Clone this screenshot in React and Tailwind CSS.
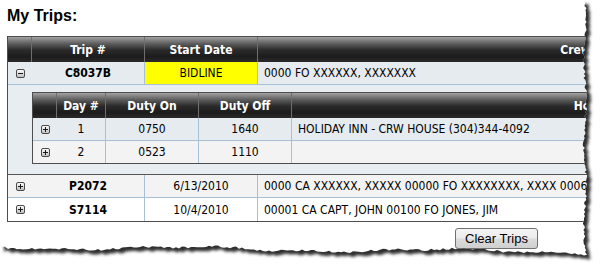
import React from "react";

const bodyFont = "font-['DejaVu_Sans_Condensed','DejaVu_Sans',sans-serif]";
const headBg =
  "bg-[linear-gradient(to_bottom,#a2a2a2_0%,#5a5a5a_28%,#2b2b2b_52%,#1c1c1c_78%,#2a2a2a_100%)]";

const ToggleIcon = ({ open }) => (
  <svg width="9" height="9" viewBox="0 0 9 9" className="block">
    <defs>
      <linearGradient id="tgl" x1="0" y1="0" x2="0" y2="1">
        <stop offset="0" stopColor="#ffffff" />
        <stop offset="1" stopColor="#bdbdbd" />
      </linearGradient>
    </defs>
    <rect x="0.5" y="0.5" width="8" height="8" rx="1.5" fill="url(#tgl)" stroke="#4a4a4a" />
    <path d="M2 4.5H7" stroke="#1a1a1a" />
    {!open && <path d="M4.5 2V7" stroke="#1a1a1a" />}
  </svg>
);

// jagged torn-paper edge along the right and bottom of the shot
const lcg = (seed) => {
  let s = seed;
  return () => {
    s = (s * 16807) % 2147483647;
    return s / 2147483647;
  };
};
const rnd = lcg(11);
const pts = [[0, 0]];
for (let y = 0; y <= 252; y += 2) {
  pts.push([585 + Math.sin(y / 13) * 1.1 + (rnd() - 0.5) * 2.4, y]);
}
for (let x = 587; x >= 0; x -= 3) {
  pts.push([
    x,
    247 + (x / 587) * 5 + Math.sin(x / 41) * 1.8 + Math.sin(x / 13) * 0.8 + (rnd() - 0.5) * 2.2,
  ]);
}
pts.push([0, 248]);
const paper = "M" + pts.map(([x, y]) => `${x.toFixed(1)},${y.toFixed(1)}`).join("L") + "Z";
const outside = "M-10,-10H620V290H-10Z" + paper;

const TornEdge = () => (
  <svg className="absolute inset-0 pointer-events-none" width="602" height="273" viewBox="0 0 602 273">
    <defs>
      <clipPath id="outside">
        <path d={outside} clipRule="evenodd" />
      </clipPath>
      <filter id="soft" x="-5%" y="-5%" width="110%" height="110%">
        <feGaussianBlur stdDeviation="1.6" />
      </filter>
    </defs>
    <path d={outside} fill="#fff" fillRule="evenodd" />
    <g clipPath="url(#outside)">
      <path d={paper} fill="#2e2e2e" transform="translate(4 4)" filter="url(#soft)" />
    </g>
  </svg>
);

const TripRow = ({ trip, date, crew, rowBg, dateBg, open, last }) => (
  <div className={`flex h-[23px] ${rowBg} ${last ? "h-[22px]" : "border-b border-[#a8c0d6]"}`}>
    <div className="w-[24px] flex items-center justify-center">
      <ToggleIcon open={open} />
    </div>
    <div className="w-[113px] border-r border-[#a8c0d6] flex items-center justify-center font-bold">{trip}</div>
    <div className={`w-[113px] border-r border-[#a8c0d6] flex items-center justify-center ${dateBg}`}>{date}</div>
    <div className="flex-1 flex items-center pl-[6px] whitespace-nowrap">{crew}</div>
  </div>
);

const days = [
  { day: "1", on: "0750", off: "1640", hotel: "HOLIDAY INN - CRW HOUSE (304)344-4092", bg: "bg-[#e6ebf0]" },
  { day: "2", on: "0523", off: "1110", hotel: "", bg: "bg-[#f3f3f3]" },
];

export default function App() {
  return (
    <div className="relative w-[602px] h-[273px] overflow-hidden bg-white">
      <div className="pl-[7px] pt-[7px]">
        <h1 className="font-['Liberation_Sans',Arial,sans-serif] text-[16px] leading-[18px] font-bold text-black">
          My Trips:
        </h1>

        <div className={`mt-[11px] w-[887px] border border-[#4d4d4d] ${bodyFont} text-[12px] text-black`}>
          <div className={`flex h-[25px] ${headBg} text-white font-bold`}>
            <div className="w-[24px] border-r border-[#6e6e6e]" />
            <div className="w-[113px] border-r border-[#6e6e6e] flex items-center justify-center">Trip #</div>
            <div className="w-[113px] border-r border-[#6e6e6e] flex items-center justify-center">Start Date</div>
            <div className="flex-1 flex items-center justify-center">Crew</div>
          </div>

          <TripRow
            trip="C8037B"
            date="BIDLINE"
            crew="0000 FO XXXXXX, XXXXXXX"
            rowBg="bg-[#e6ebf0]"
            dateBg="bg-[#ffff00]"
            open
          />

          <div className="bg-[#e8edf1] border-b border-[#555] pt-[7px] pb-[10px] pl-[24px]">
            <div className="w-[857px] border border-[#4d4d4d]">
              <div className={`flex h-[25px] ${headBg} text-white font-bold`}>
                <div className="w-[24px] border-r border-[#6e6e6e]" />
                <div className="w-[49px] border-r border-[#6e6e6e] flex items-center justify-center">Day #</div>
                <div className="w-[93px] border-r border-[#6e6e6e] flex items-center justify-center">Duty On</div>
                <div className="w-[93px] border-r border-[#6e6e6e] flex items-center justify-center">Duty Off</div>
                <div className="flex-1 flex items-center justify-center">Hotel</div>
              </div>
              {days.map((d, i) => (
                <div key={d.day} className={`flex ${d.bg} ${i === 0 ? "h-[23px] border-b border-[#a8c0d6]" : "h-[22px]"}`}>
                  <div className="w-[24px] flex items-center justify-center">
                    <ToggleIcon />
                  </div>
                  <div className="w-[49px] border-r border-[#a8c0d6] flex items-center justify-center">{d.day}</div>
                  <div className="w-[93px] border-r border-[#a8c0d6] flex items-center justify-center">{d.on}</div>
                  <div className="w-[93px] border-r border-[#a8c0d6] flex items-center justify-center">{d.off}</div>
                  <div className="flex-1 flex items-center pl-[6px] whitespace-nowrap">{d.hotel}</div>
                </div>
              ))}
            </div>
          </div>

          <TripRow
            trip="P2072"
            date="6/13/2010"
            crew="0000 CA XXXXXX, XXXXX 00000 FO XXXXXXXX, XXXX 00061 FA XXXXX, XXXXX"
            rowBg="bg-[#f3f3f3]"
            dateBg=""
          />
          <TripRow trip="S7114" date="10/4/2010" crew="00001 CA CAPT, JOHN 00100 FO JONES, JIM" rowBg="bg-white" dateBg="" last />
        </div>

        <div className="w-[531px] flex justify-end mt-[6px]">
          <button
            type="button"
            className="w-[83px] h-[21px] rounded-[3px] border border-[#707070] bg-[linear-gradient(to_bottom,#f4f4f4_0%,#ebebeb_48%,#dcdcdc_52%,#cfcfcf_100%)] font-['Liberation_Sans',Arial,sans-serif] text-[13px] leading-[19px] text-black"
          >
            Clear Trips
          </button>
        </div>
      </div>
      <TornEdge />
    </div>
  );
}
